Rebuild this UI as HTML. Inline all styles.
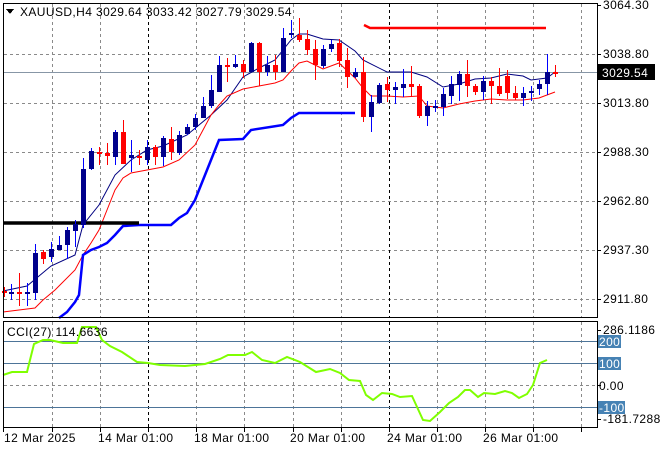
<!DOCTYPE html>
<html><head><meta charset="utf-8"><style>
html,body{margin:0;padding:0;background:#fff;width:660px;height:450px;overflow:hidden}
svg text{font-family:"Liberation Sans",sans-serif;font-size:12px;letter-spacing:0.4px;fill:#000}
</style></head><body>
<svg id="s" width="660" height="450" xmlns="http://www.w3.org/2000/svg" shape-rendering="crispEdges">
<rect width="660" height="450" fill="#fff"/>
<g id="grid" stroke="#8a8a8a" stroke-dasharray="3,3" stroke-width="1"></g>
<line x1="3" y1="72.5" x2="597" y2="72.5" stroke="#8796a6"/>
<line x1="3" y1="341.5" x2="597" y2="341.5" stroke="#4d7498"/>
<line x1="3" y1="363.5" x2="597" y2="363.5" stroke="#4d7498"/>
<line x1="3" y1="407.5" x2="597" y2="407.5" stroke="#4d7498"/>
<g id="ind" shape-rendering="auto"></g>
<g id="cd"></g>
<rect x="3.5" y="3.5" width="594" height="314" fill="none" stroke="#000"/>
<rect x="3.5" y="321.5" width="594" height="106" fill="none" stroke="#000"/>
<g stroke="#000" id="ticks"></g>
<polygon points="6,9 14,9 10,14" fill="#000"/>
<text x="20" y="16">XAUUSD,H4  3029.64 3033.42 3027.79 3029.54</text>
<text x="7" y="336">CCI(27) 114.6636</text>
<text x="603" y="9">3064.30</text>
<text x="603" y="58">3038.80</text>
<rect x="598" y="64" width="57" height="16" fill="#000"/>
<text x="602" y="77" style="fill:#fff">3029.54</text>
<text x="603" y="107">3013.80</text>
<text x="603" y="156">2988.30</text>
<text x="603" y="205">2962.80</text>
<text x="603" y="254">2937.30</text>
<text x="603" y="303">2911.80</text>
<text x="603" y="334">286.1186</text>
<rect x="598" y="335" width="23" height="13" fill="#4682b4"/>
<text x="599" y="346" style="fill:#fff">200</text>
<rect x="598" y="357" width="23" height="13" fill="#4682b4"/>
<text x="599" y="368" style="fill:#fff">100</text>
<text x="599" y="390">0.00</text>
<rect x="598" y="401" width="27" height="13" fill="#4682b4"/>
<text x="599" y="412" style="fill:#fff">-100</text>
<text x="603" y="423">-181.7288</text>
<text x="4" y="442">12 Mar 2025</text>
<text x="98" y="442">14 Mar 01:00</text>
<text x="194" y="442">18 Mar 01:00</text>
<text x="290" y="442">20 Mar 01:00</text>
<text x="387" y="442">24 Mar 01:00</text>
<text x="483" y="442">26 Mar 01:00</text>
</svg>
<script>
var NS="http://www.w3.org/2000/svg";
function el(p,t,a){var e=document.createElementNS(NS,t);for(var k in a)e.setAttribute(k,a[k]);p.appendChild(e);return e;}
var g=document.getElementById('grid');
[54,103,152,201,250,299].forEach(function(y){el(g,'line',{x1:4,x2:597,y1:y+.5,y2:y+.5});});
el(g,'line',{x1:4,x2:597,y1:385.5,y2:385.5});
for(var i=0;i<12;i++){var x=52+i*48.1;x=Math.round(x)+.5;var blk=(i==2||i==7);
 var a={x1:x,x2:x,y1:4,y2:317};if(blk){a.stroke='#000';}
 el(g,'line',a);var b={x1:x,x2:x,y1:322,y2:427};if(blk)b.stroke='#000';el(g,'line',b);}
var ind=document.getElementById('ind');
function pl(pts,c,w){el(ind,'polyline',{points:pts,fill:'none',stroke:c,'stroke-width':w});}
pl("3,291 27,286 51,266 75,255 83,225 99,205 115,175 131,160 147,150 163,146 187,135 211,115 227,100 243,77 259,68 275,60 291,40 299,34 307,34 323,39 339,40 355,51 363,60 387,72 411,72 427,77 443,87 459,84 475,79 491,78 507,74 523,76 531,80 547,78 555,72","#000080",1);
pl("3,312 27,309 35,308 43,300 55,290 75,270 83,255 91,243 99,230 107,210 115,190 123,178 131,173 147,170 163,167 179,160 195,145 203,130 211,115 219,105 227,96 243,89 259,86 275,83 283,80 291,71 299,63 307,61 315,65 323,69 339,63 355,78 363,88 371,96 387,96 403,97 419,96 427,106 443,108 459,104 475,101 491,99 507,100 523,100 539,98 555,92","#ff0000",1);
pl("59,318 67,312 75,302 79,295 83,255 91,250 99,247 107,243 115,235 123,226 139,225 171,225 179,218 187,213 195,200 203,180 211,160 219,140 243,139 251,130 283,125 291,118 299,113 355,113","#0000ff",2.5);
pl("3,223 139,223","#000",3.5);
pl("364,25 370,28 546,28","#ff0000",2.5);
pl("3,375 12,372 27,372 34,344 43,340 50,340 63,343 77,343 82,327 96,327 102,340 110,346 122,352 137,362 148,363 160,365 185,366 205,364 220,359 228,355 245,355 252,352 262,360 275,363 287,357 300,362 316,372 330,369 340,373 349,380 360,381 366,395 373,400 382,393 392,394 400,397 412,396 423,420 430,421 440,412 449,403 458,397 465,390 470,390 478,397 484,393 495,394 505,391 512,393 519,398 527,394 533,385 540,363 547,360","#7fff00",2);
var C=[
[4,'r',291,293,287,297],[11,'b',292,294,284,300],[19,'r',292,294,273,306],[27,'b',292,294,283,306],[35,'b',253,293,244,300],
[43,'r',252,259,250,264],[51,'b',249,257,242,262],[59,'b',245,250,236,250],[67,'b',230,245,227,259],[75,'b',224,231,220,247],
[83,'b',169,225,158,228],[91,'b',151,169,148,170],[99,'r',152,154,147,165],[107,'r',153,156,143,165],[115,'b',132,157,130,165],
[123,'r',132,164,120,163],[131,'b',155,158,140,172],[139,'r',156,158,150,165],[147,'b',147,160,140,165],[155,'r',147,157,145,165],
[163,'b',138,157,136,166],[171,'r',139,152,127,160],[179,'b',135,153,131,155],[187,'b',127,134,124,135],[195,'b',118,127,114,130],
[203,'b',106,118,97,118],[211,'b',90,106,75,108],[219,'b',65,92,56,92],[227,'r',65,66,58,82],[235,'b',64,67,55,68],
[243,'r',64,72,60,78],[251,'b',43,72,42,72],[259,'r',43,72,42,86],[267,'b',65,72,56,76],[275,'r',65,72,55,80],
[283,'b',38,72,28,72],[291,'b',33,34,20,38],[299,'r',35,40,18,42],[307,'r',39,50,30,55],[315,'r',49,65,40,80],
[323,'b',49,66,45,68],[331,'b',44,49,40,52],[339,'r',43,61,39,67],[347,'r',60,77,48,88],[355,'b',72,77,68,78],
[363,'r',72,117,57,122],[371,'b',102,117,95,132],[379,'b',85,103,83,104],[387,'r',84,90,77,102],[395,'b',87,90,82,104],
[403,'b',84,88,69,97],[411,'r',84,87,66,97],[419,'r',86,116,84,118],[427,'b',106,116,101,126],[435,'b',106,108,100,112],
[443,'b',94,107,88,116],[451,'b',84,96,76,104],[459,'b',74,85,71,101],[467,'r',74,86,60,97],[475,'r',86,92,84,95],
[483,'b',81,92,76,100],[491,'r',81,86,77,104],[499,'r',86,94,68,96],[507,'r',76,93,70,99],[515,'r',93,98,86,100],
[523,'b',93,98,87,106],[531,'b',91,93,86,101],[539,'b',84,89,80,95],[547,'b',72,84,54,95],[555,'r',72,73,65,77]];
var cd=document.getElementById('cd');
C.forEach(function(c){var col=c[1]=='r'?'#ff0000':'#00008b',wc=c[1]=='r'?'#ff0000':'#0000ff';
 el(cd,'rect',{x:c[0],y:c[4],width:1,height:c[5]-c[4],fill:wc});
 var h=Math.max(2,c[3]-c[2]);el(cd,'rect',{x:c[0]-2,y:c[2],width:5,height:h,fill:col});});
var tk=document.getElementById('ticks');
[5,54,103,152,201,250,299,330,341,363,385,407,419].forEach(function(y){el(tk,'line',{x1:597,x2:601,y1:y+.5,y2:y+.5});});
for(var i=0;i<12;i++){var x=Math.round(52+i*48.1)+.5;el(tk,'line',{x1:x,x2:x,y1:428,y2:432});}
el(tk,'line',{x1:3.5,x2:3.5,y1:428,y2:432});
</script>
</body></html>
